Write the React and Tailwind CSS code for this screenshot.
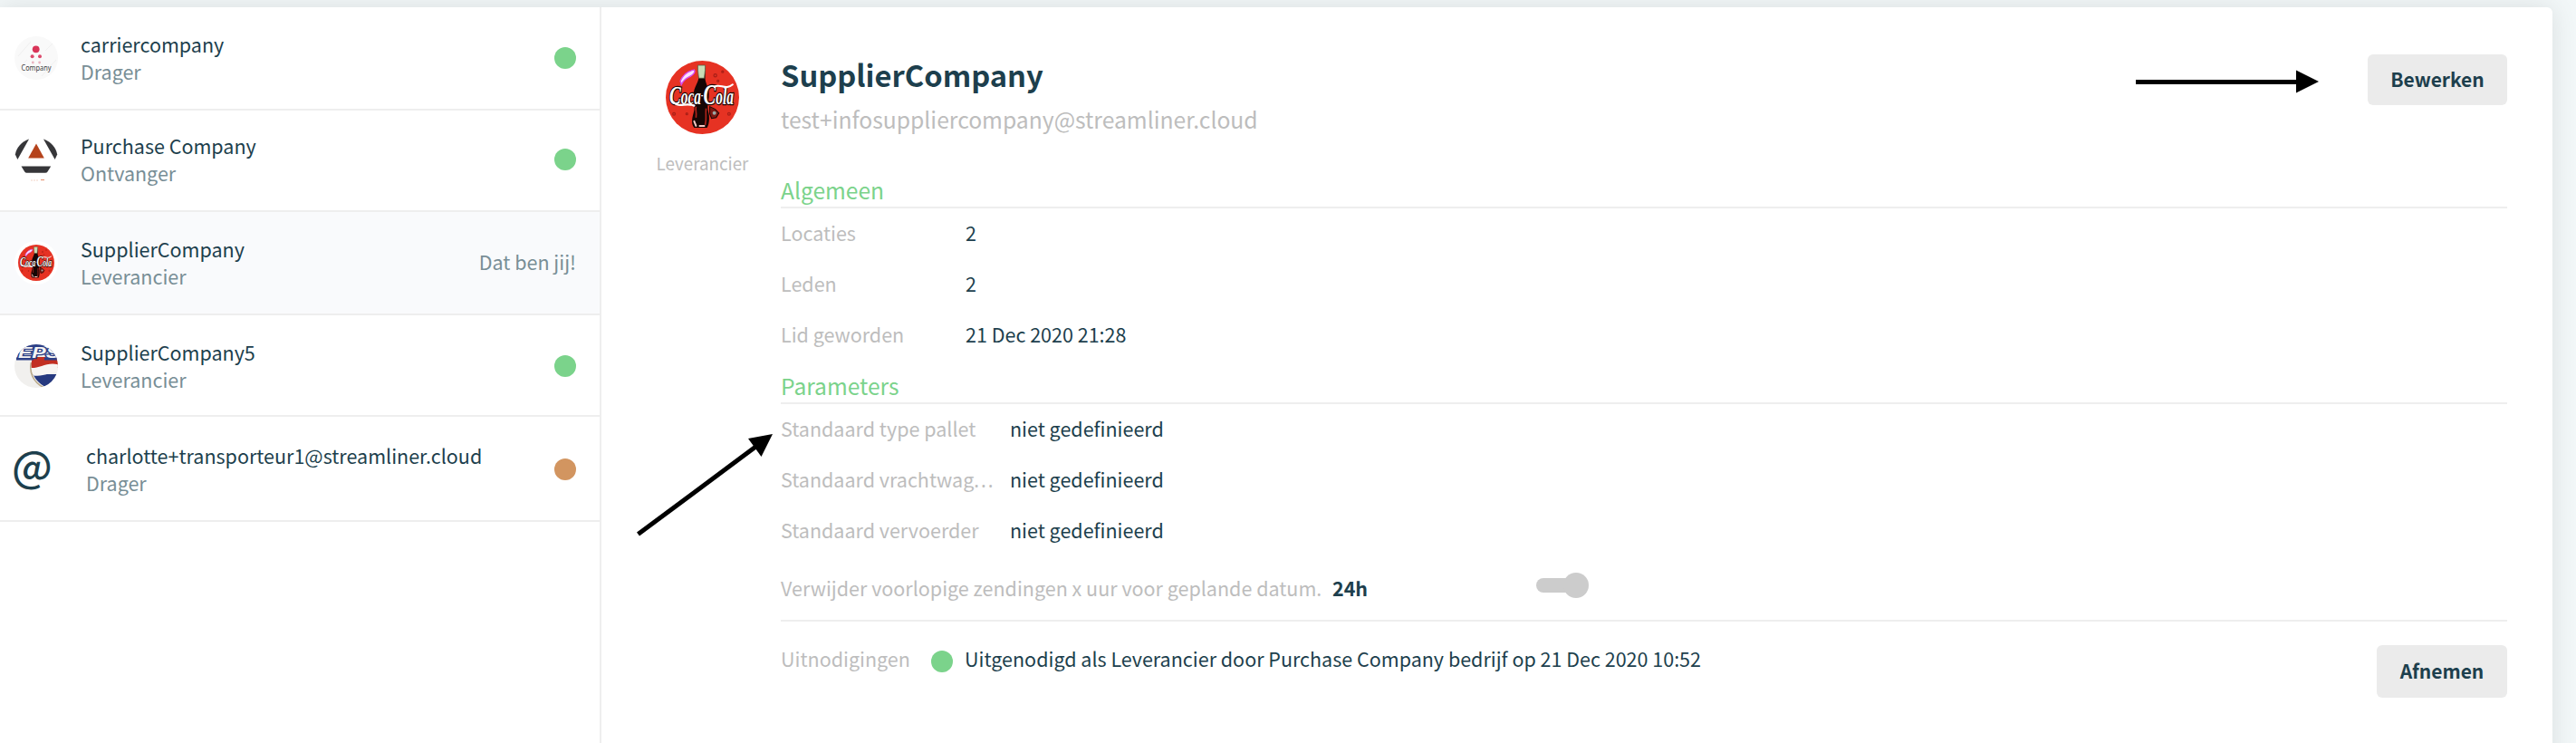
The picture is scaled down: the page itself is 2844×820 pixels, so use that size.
import React from 'react';

const CocaColaLogo = ({ className }) => (
  <svg viewBox="0 0 80 80" className={className}>
    <circle cx="40" cy="40" r="40" fill="#e63223" />
    <g fill="none" stroke="#a81f17" strokeWidth="1.2">
      <circle cx="54" cy="16" r="1.6" />
      <circle cx="62" cy="12" r="1" />
      <circle cx="57" cy="22" r="1" />
      <circle cx="9" cy="58" r="1.4" />
      <circle cx="23" cy="58" r="1" />
      <circle cx="69" cy="58" r="1.4" />
    </g>
    <path
      d="M36 8 L43 8 L43 20 C44 27 48 30 47 40 C46 46 45 50 47 58 C48 64 47 70 45 73 L31 73 C27 68 29 62 31 54 C32 46 29 40 31 32 C33 26 36 22 36 17 Z"
      fill="#160605"
    />
    <path d="M35 5 h8 v5 l-1 9 h-6 l-1 -9 Z" fill="#c9dcb6" stroke="#4d5b40" strokeWidth="0.7" />
    <path d="M33 50 C32 54 34 56 33 62 M44 52 C43 60 45 63 43 70" fill="none" stroke="#b2231a" strokeWidth="1.6" />
    <path d="M31 66 l2 5 M37 71 h5" stroke="#f7c9c4" strokeWidth="2" strokeLinecap="round" />
    <path d="M48 50 l6 3 4 4 -3 5 -5 1 -2 -5 Z" fill="#7c1812" stroke="#160605" />
    <circle cx="53" cy="57" r="2" fill="#9aa7a5" />
    <path
      d="M16 22 C19 15 25 11 31 10 C33 13 29 16 25 18 C21 20 19 22 17 26 Z"
      fill="#fbe4ff"
      stroke="#d64bf0"
      strokeWidth="1.4"
    />
    <text
      x="4"
      y="47"
      textLength="70"
      lengthAdjust="spacingAndGlyphs"
      fontFamily="'Liberation Serif', serif"
      fontStyle="italic"
      fontWeight="700"
      fontSize="24"
      fill="#ffffff"
      stroke="#1b0504"
      strokeWidth="2.6"
      paintOrder="stroke"
    >
      <tspan fontSize="30">C</tspan>oca<tspan fontSize="12" dy="-6">-</tspan>
      <tspan fontSize="32" dy="6">C</tspan>ola
    </text>
    <path d="M8 45 C15 52 22 45 31 49" fill="none" stroke="#ffffff" strokeWidth="2.2" strokeLinecap="round" />
    <path d="M53 28.5 C59 24 65 33 73 26" fill="none" stroke="#ffffff" strokeWidth="2" strokeLinecap="round" />
  </svg>
);

const CarrierLogo = () => (
  <svg viewBox="0 0 48 48" className="size-12 shrink-0">
    <circle cx="24" cy="24" r="24" fill="#f9f9f9" />
    <path d="M4 22 L18 6 M30 44 L46 26 M34 16 L42 8 M6 34 L14 26" stroke="#f0f0f0" />
    <circle cx="23.7" cy="14.3" r="3.9" fill="#d93458" />
    <circle cx="19.6" cy="22.2" r="2" fill="#dc4b6c" />
    <circle cx="28" cy="22.2" r="2" fill="#dc4b6c" />
    <circle cx="20.3" cy="29" r="1.4" fill="#e9b3bf" />
    <circle cx="27.6" cy="29" r="1.4" fill="#e9b3bf" />
    <text
      x="7.5"
      y="37.8"
      textLength="33"
      lengthAdjust="spacingAndGlyphs"
      fontFamily="'Noto Sans', sans-serif"
      fontSize="8"
      fill="#3d3d3d"
    >
      Company
    </text>
  </svg>
);

const PurchaseLogo = () => (
  <svg viewBox="0 0 48 48" className="size-12 shrink-0">
    <path d="M16 1.5 C8 4 2 11 0.8 18.5 L3.4 24 Z" fill="#363639" />
    <path d="M32 1.5 C40 4 46 11 47.2 18.5 L44.6 24 Z" fill="#363639" />
    <path d="M24 6.5 L32.8 22.5 H15.2 Z" fill="#b5431c" />
    <path d="M7.5 31.5 H40.2 L36.5 37.5 Q35.8 38.7 34 38.7 H13.5 Q12 38.7 11.2 37.5 Z" fill="#363639" />
    <path d="M18 47 H27" stroke="#f3d3c6" strokeDasharray="2 1" />
    <path d="M29 46.6 H33" stroke="#e58a66" />
  </svg>
);

const PepsiLogo = () => (
  <svg viewBox="0 0 48 48" className="size-12 shrink-0">
    <defs>
      <clipPath id="pepsi-round">
        <circle cx="24" cy="24" r="24" />
      </clipPath>
      <clipPath id="pepsi-globe">
        <path d="M20 14 C17 24 18 38 33 46.5 C41 45 47 36 48 28 V14 Z" />
      </clipPath>
    </defs>
    <g clipPath="url(#pepsi-round)">
      <rect width="48" height="48" fill="#f1f0ee" />
      <path d="M18.5 20 C16 30 20 42 33 48" fill="none" stroke="#b9a98a" strokeWidth="1.6" />
      <g clipPath="url(#pepsi-globe)">
        <rect x="14" y="12" width="34" height="14" fill="#c22f22" />
        <rect x="14" y="33" width="34" height="15" fill="#26397f" />
        <path d="M14 25 C24 30 36 17 50 23 V31 C40 28 30 40 14 32 Z" fill="#f7f5f3" />
      </g>
      <path d="M10 0 H40 V2 H10 Z M2 14.5 H21 V17.5 H2 Z M33 14.5 H48 V17.5 H33 Z" fill="#2c3f86" />
      <text
        x="4"
        y="14.5"
        textLength="46"
        lengthAdjust="spacingAndGlyphs"
        fontFamily="'Liberation Sans', sans-serif"
        fontWeight="700"
        fontStyle="italic"
        fontSize="16"
        fill="#f5f4f3"
        stroke="#2c3f86"
        strokeWidth="2.4"
        paintOrder="stroke"
      >
        EPS
      </text>
    </g>
  </svg>
);

const companies = [
  {
    name: 'carriercompany',
    role: 'Drager',
    logo: <CarrierLogo />,
    status: 'bg-[#7bd38b]',
    height: 'h-[114px]',
  },
  {
    name: 'Purchase Company',
    role: 'Ontvanger',
    logo: <PurchaseLogo />,
    status: 'bg-[#7bd38b]',
    height: 'h-28 pb-0.5',
  },
  {
    name: 'SupplierCompany',
    role: 'Leverancier',
    logo: (
      <div className="size-12 shrink-0 rounded-full bg-white p-1">
        <CocaColaLogo className="size-10" />
      </div>
    ),
    self: true,
    height: 'h-[114px]',
  },
  {
    name: 'SupplierCompany5',
    role: 'Leverancier',
    logo: <PepsiLogo />,
    status: 'bg-[#7bd38b]',
    height: 'h-28 pt-0.5',
  },
  {
    name: 'charlotte+transporteur1@streamliner.cloud',
    role: 'Drager',
    logo: <span className="-ml-[3px] w-[57px] shrink-0 pb-3 text-[46px] leading-[48px] font-medium">@</span>,
    status: 'bg-[#d29560]',
    height: 'h-[116px] pt-0.5',
  },
];

const general = [
  { label: 'Locaties', value: '2' },
  { label: 'Leden', value: '2' },
  { label: 'Lid geworden', value: '21 Dec 2020 21:28' },
];

const parameters = [
  { label: 'Standaard type pallet', value: 'niet gedefinieerd' },
  { label: 'Standaard vrachtwag', clipped: true, value: 'niet gedefinieerd' },
  { label: 'Standaard vervoerder', value: 'niet gedefinieerd' },
];

const CompanyRow = ({ company }) => (
  <li
    className={`flex items-center border-b-2 border-[#eeeeee] pr-[26px] pl-4 ${company.height} ${
      company.self ? 'bg-[#f9fafc]' : ''
    }`}
  >
    {company.logo}
    <div className="ml-[25px] flex-1 pb-px leading-[30px]">
      <p>{company.name}</p>
      <p className="text-[#788e96]">{company.role}</p>
    </div>
    {company.self ? (
      <span className="pb-0.5 text-[#788e96]">Dat ben jij!</span>
    ) : (
      <span className={`size-6 rounded-full ${company.status}`} />
    )}
  </li>
);

const SectionTitle = ({ children }) => (
  <h2 className="h-[38px] border-b-2 border-[#eeeeee] text-[24.6px] leading-[34px] text-[#7bd38b]">{children}</h2>
);

const Button = ({ children, className }) => (
  <button className={`rounded-md bg-[#ebebeb] pb-px text-[21px] font-bold ${className}`}>{children}</button>
);

export default function App() {
  return (
    <div className="flex h-[820px] w-[2844px] overflow-hidden bg-[#f2f7f8] pt-2 font-['Noto_Sans_CJK_SC',sans-serif] text-[21.5px] text-[#1d3f4d]">
      <div className="flex h-[840px] w-[2818px] rounded-tr-md bg-white shadow-[0_0_28px_rgba(0,0,0,0.1)]">
        <ul className="w-[664px] border-r-2 border-[#eeeeee]">
          {companies.map((company) => (
            <CompanyRow key={company.name} company={company} />
          ))}
        </ul>

        <div className="w-[198px] pt-[59px] pl-[61px]">
          <div className="flex w-[101px] flex-col items-center">
            <CocaColaLogo className="size-[81px]" />
            <span className="mt-4 text-[18.8px] leading-8 text-[#bdbdbd]">Leverancier</span>
          </div>
        </div>

        <div className="w-[1906px]">
          <div className="flex justify-between pt-[52px]">
            <div>
              <h1 className="pt-0.5 text-[32.7px] leading-10 font-bold">SupplierCompany</h1>
              <p className="mt-3 mb-0.5 text-[24.7px] leading-[34px] text-[#bdbdbd]">
                test+infosuppliercompany@streamliner.cloud
              </p>
            </div>
            <Button className="h-14 w-[154px]">Bewerken</Button>
          </div>

          <div className="mt-[42px]">
            <SectionTitle>Algemeen</SectionTitle>
            <dl className="flex flex-col gap-0.5 leading-[54px]">
              {general.map(({ label, value }) => (
                <div key={label} className="flex">
                  <dt className="w-[204px] text-[#bdbdbd]">{label}</dt>
                  <dd>{value}</dd>
                </div>
              ))}
            </dl>
          </div>

          <div className="mt-3">
            <SectionTitle>Parameters</SectionTitle>
            <dl className="flex flex-col gap-0.5 leading-[54px]">
              {parameters.map(({ label, clipped, value }) => (
                <div key={label} className="flex h-[54px]">
                  <dt className="w-[253px] text-[#bdbdbd]">
                    {label}
                    {clipped && <span className="font-['Noto_Sans',sans-serif] tracking-[2px]">...</span>}
                  </dt>
                  <dd>{value}</dd>
                </div>
              ))}
            </dl>
            <div className="mt-2.5 flex h-16 border-b-2 border-[#eeeeee] leading-[54px]">
              <span className="w-[609px] whitespace-nowrap text-[#bdbdbd]">
                Verwijder voorlopige zendingen x uur voor geplande datum.
              </span>
              <span className="w-[225px] font-bold">24h</span>
              <span className="mt-[10px] flex h-7 items-center">
                <span className="h-4 w-10 rounded-full bg-[#cccccc]" />
                <span className="-ml-[10px] size-7 rounded-full bg-[#cccccc]" />
              </span>
            </div>
          </div>

          <div className="flex pt-[26px]">
            <div className="-mt-3 flex flex-1 items-center self-start leading-[54px]">
              <span className="w-[166px] text-[#bdbdbd]">Uitnodigingen</span>
              <span className="mt-1.5 mr-[13px] size-6 rounded-full bg-[#7bd38b]" />
              <span>Uitgenodigd als Leverancier door Purchase Company bedrijf op 21 Dec 2020 10:52</span>
            </div>
            <Button className="h-[58px] w-36">Afnemen</Button>
          </div>
        </div>
      </div>

      {/* Pointer arrows on top of the page */}
      <svg className="pointer-events-none absolute top-0 left-0" width="2844" height="820" viewBox="0 0 2844 820">
        <path d="M2358 90.5 H2537" stroke="#000" strokeWidth="5" />
        <path d="M2535 77.5 L2560 90 L2535 102.5 Z" />
        <path d="M704.5 589.5 L835 492.5" stroke="#000" strokeWidth="5" />
        <path d="M853 479 L826 484 L840.5 504 Z" />
      </svg>
    </div>
  );
}
